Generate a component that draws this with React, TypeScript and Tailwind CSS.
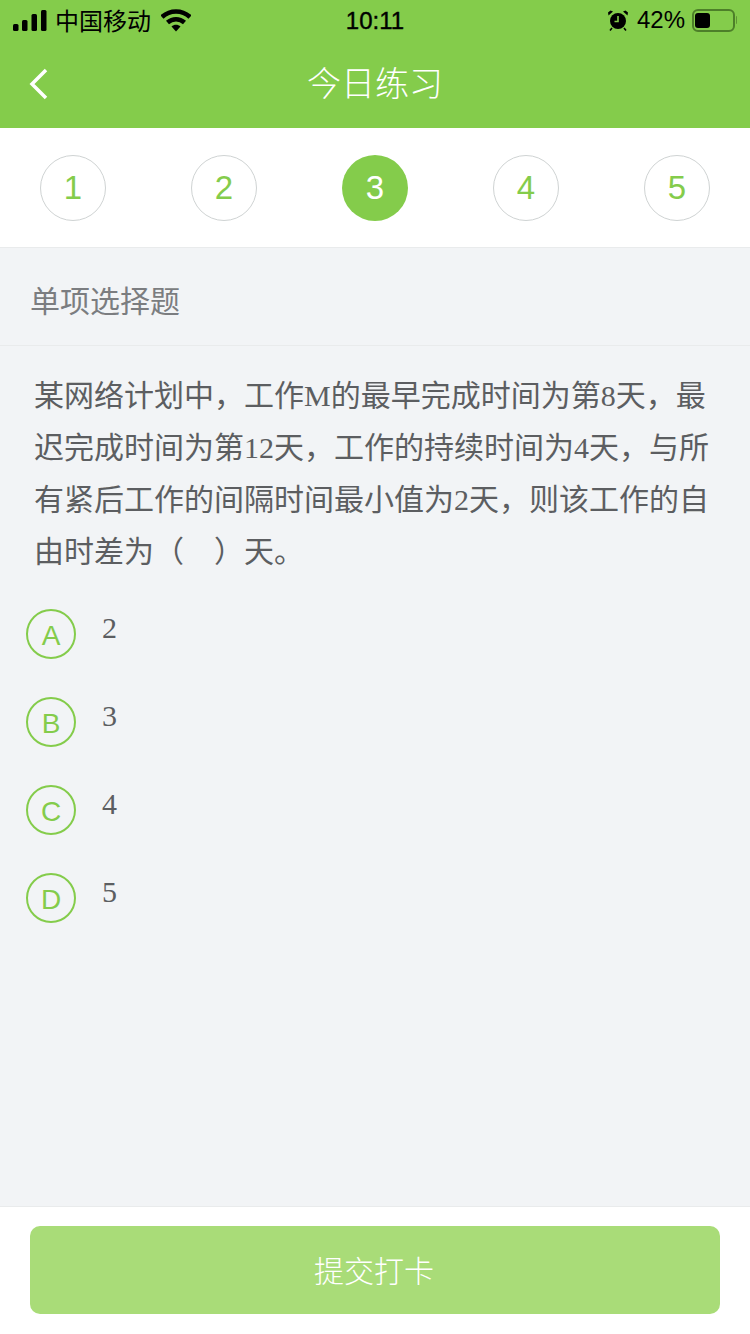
import React from 'react';

const GREEN = 'text-[#84cc4b]';
const serifCjk = 'font-["Liberation_Serif","Noto_Sans_CJK_SC",serif]';

function StatusBar() {
  return (
    <div className="relative flex h-[40px] items-center justify-between pl-[13px] pr-[13px] text-black">
      <div className="flex items-center">
        <svg width="34" height="21" viewBox="0 0 34 21" className="mr-[8px]">
          <rect x="0" y="14" width="5.5" height="7" rx="1.5" fill="#000" />
          <rect x="9" y="10" width="5.5" height="11" rx="1.5" fill="#000" />
          <rect x="18.5" y="4" width="5.5" height="17" rx="1.5" fill="#000" />
          <rect x="28" y="0" width="5.5" height="21" rx="1.5" fill="#000" />
        </svg>
        <span className="text-[24px] leading-none">中国移动</span>
        <svg width="30" height="23" viewBox="0 0 30 23" className="ml-[10px]">
          <path d="M1 8C9 0.5 21 0.5 29 8" fill="none" stroke="#000" strokeWidth="4.5" />
          <path d="M6.5 13.5C11.5 9 18.5 9 23.5 13.5" fill="none" stroke="#000" strokeWidth="4.5" />
          <path d="M10.5 17.5C13 15.2 17 15.2 19.5 17.5L15 22.5Z" fill="#000" />
        </svg>
      </div>
      <span className='absolute left-0 right-0 top-[9px] text-center font-["Liberation_Sans",sans-serif] text-[24px] font-medium leading-none [-webkit-text-stroke:0.4px_#000]'>10:11</span>
      <div className="flex items-center">
        <svg width="20" height="21" viewBox="0 0 20 21" className="mr-[9px]">
          <circle cx="10" cy="11" r="8" fill="#000" />
          <path d="M10 6v5.5H6.5" fill="none" stroke="#84cc4b" strokeWidth="1.6" />
          <path d="M0.5 5.5L5 1.5 2.5 0.5 0 2.5zM19.5 5.5L15 1.5 17.5 0.5 20 2.5z" fill="#000" />
          <path d="M4 18l-2 2.4M16 18l2 2.4" stroke="#000" strokeWidth="1.6" />
        </svg>
        <span className='font-["Liberation_Sans",sans-serif] text-[24px] leading-none'>42%</span>
        <div className="relative ml-[7px] flex h-[23px] w-[43px] items-center rounded-[6px] border-2 border-[#4d7f29] p-[1px]">
          <div className="h-[15px] w-[15px] rounded-[3px] bg-black" />
        </div>
        <div className="ml-[1px] h-[8px] w-[1px] rounded-r-sm bg-[#5f9433]" />
      </div>
    </div>
  );
}

function Steps() {
  const steps = [1, 2, 3, 4, 5];
  return (
    <div className='flex h-[120px] items-center justify-between border-b border-[#e9ebec] bg-white px-[40px] font-["Liberation_Sans",sans-serif]'>
      {steps.map((n) =>
        n === 3 ? (
          <div key={n} className="flex h-[66px] w-[66px] items-center justify-center rounded-full bg-[#84cc4b] text-[33px] text-white">
            {n}
          </div>
        ) : (
          <div key={n} className={`flex h-[66px] w-[66px] items-center justify-center rounded-full border border-[#cfd3d3] text-[33px] ${GREEN}`}>
            {n}
          </div>
        ),
      )}
    </div>
  );
}

export default function App() {
  const options = [
    { key: 'A', value: '2' },
    { key: 'B', value: '3' },
    { key: 'C', value: '4' },
    { key: 'D', value: '5' },
  ];

  return (
    <main className='flex h-[1334px] w-[750px] flex-col overflow-hidden bg-[#f2f4f6] font-["Noto_Sans_CJK_SC","Liberation_Sans",sans-serif]'>
      <header className="h-[128px] bg-[#84cc4b]">
        <StatusBar />
        <div className="relative flex h-[88px] items-center justify-center pb-[4px]">
          <svg width="20" height="32" viewBox="0 0 20 32" className="absolute left-[29px] top-[28px]">
            <path d="M17 2L3 16l14 14" fill="none" stroke="#fff" strokeWidth="3.5" />
          </svg>
          <h1 className="text-[34px] font-light leading-none text-white">今日练习</h1>
        </div>
      </header>

      <Steps />

      <div className="flex h-[98px] items-center border-b border-[#e9ebec] pl-[30px] pt-[6px] text-[30px] text-[#7b7d80]">
        单项选择题
      </div>

      <p className={`px-[34px] pt-[24px] text-[30px] leading-[52px] text-[#5c5e61] ${serifCjk}`}>
        某网络计划中，工作M的最早完成时间为第8天，最迟完成时间为第12天，工作的持续时间为4天，与所有紧后工作的间隔时间最小值为2天，则该工作的自由时差为（　）天。
      </p>

      <div className="flex flex-col gap-[38px] pl-[26px] pt-[31px]">
        {options.map((o) => (
          <div key={o.key} className="flex items-start">
            <div className={`flex h-[50px] w-[50px] items-center justify-center rounded-full border-2 border-[#84cc4b] pt-[3px] font-["Liberation_Sans",sans-serif] text-[28px] ${GREEN}`}>
              {o.key}
            </div>
            <span className={`ml-[26px] text-[30px] leading-[38px] text-[#5c5e61] ${serifCjk}`}>{o.value}</span>
          </div>
        ))}
      </div>

      <footer className="mt-auto flex h-[128px] items-start justify-center border-t border-[#e9ebec] bg-white pt-[19px]">
        <button className="h-[88px] w-[690px] rounded-[10px] bg-[#a9dc78] pb-[2px] pr-[2px] text-[30px] font-light text-white">提交打卡</button>
      </footer>
    </main>
  );
}
